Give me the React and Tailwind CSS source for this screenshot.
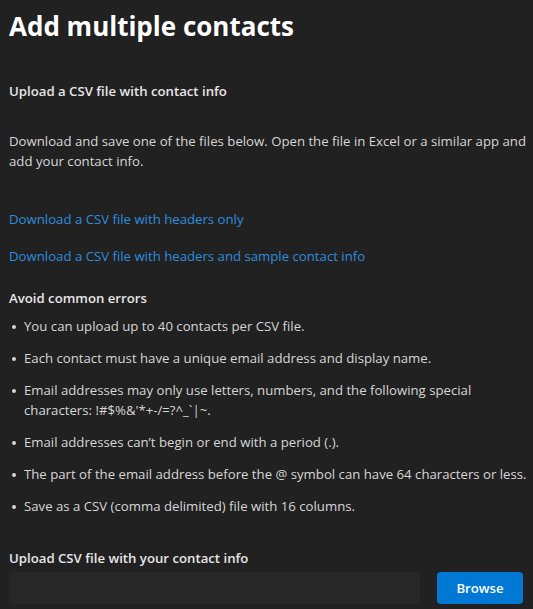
import React from "react";

const rules = [
  "You can upload up to 40 contacts per CSV file.",
  "Each contact must have a unique email address and display name.",
  "Email addresses may only use letters, numbers, and the following special characters: !#$%&'*+-/=?^_`|~.",
  "Email addresses can\u2019t begin or end with a period (.).",
  "The part of the email address before the @ symbol can have 64 characters or less.",
  "Save as a CSV (comma delimited) file with 16 columns.",
];

const Rule = ({ text }) => (
  <li className="flex">
    <span className="w-[15px] shrink-0 flex pt-[9px] pl-[3px]">
      <span className="w-[4px] h-[4px] rounded-full bg-[#d6d6d6]" />
    </span>
    <span>{text}</span>
  </li>
);

export default function App() {
  return (
    <div
      className="min-h-screen bg-[#212121] text-[#d6d6d6] pl-[9px] pr-0 pt-[8px] text-[13.2px] leading-[20px]"
      style={{ fontFamily: '"Open Sans", "Noto Sans", sans-serif' }}
    >
      <h1 className="text-[26px] leading-[36px] font-bold text-white">
        Add multiple contacts
      </h1>

      <h2 className="mt-[37px] font-semibold text-[#e6e6e6]">
        Upload a CSV file with contact info
      </h2>

      <p className="mt-[30px]">
        Download and save one of the files below. Open the file in Excel or a
        similar app and add your contact info.
      </p>

      <div className="mt-[38px] flex flex-col gap-[17px] text-[#2e8ddf]">
        <a href="#">Download a CSV file with headers only</a>
        <a href="#">Download a CSV file with headers and sample contact info</a>
      </div>

      <h2 className="mt-[22px] font-semibold text-[#e6e6e6]">
        Avoid common errors
      </h2>

      <ul className="mt-[8px] flex flex-col gap-[12px]">
        {rules.map((r) => (
          <Rule key={r} text={r} />
        ))}
      </ul>

      <h2 className="mt-[32px] font-semibold text-[#e6e6e6]">
        Upload CSV file with your contact info
      </h2>

      <div className="mt-[4px] flex items-center">
        <div className="w-[411px] h-[32px] bg-[#272727] rounded-sm" />
        <button className="ml-[17px] w-[86px] h-[32px] bg-[#0078d4] text-white font-semibold rounded-sm">
          Browse
        </button>
      </div>
    </div>
  );
}
